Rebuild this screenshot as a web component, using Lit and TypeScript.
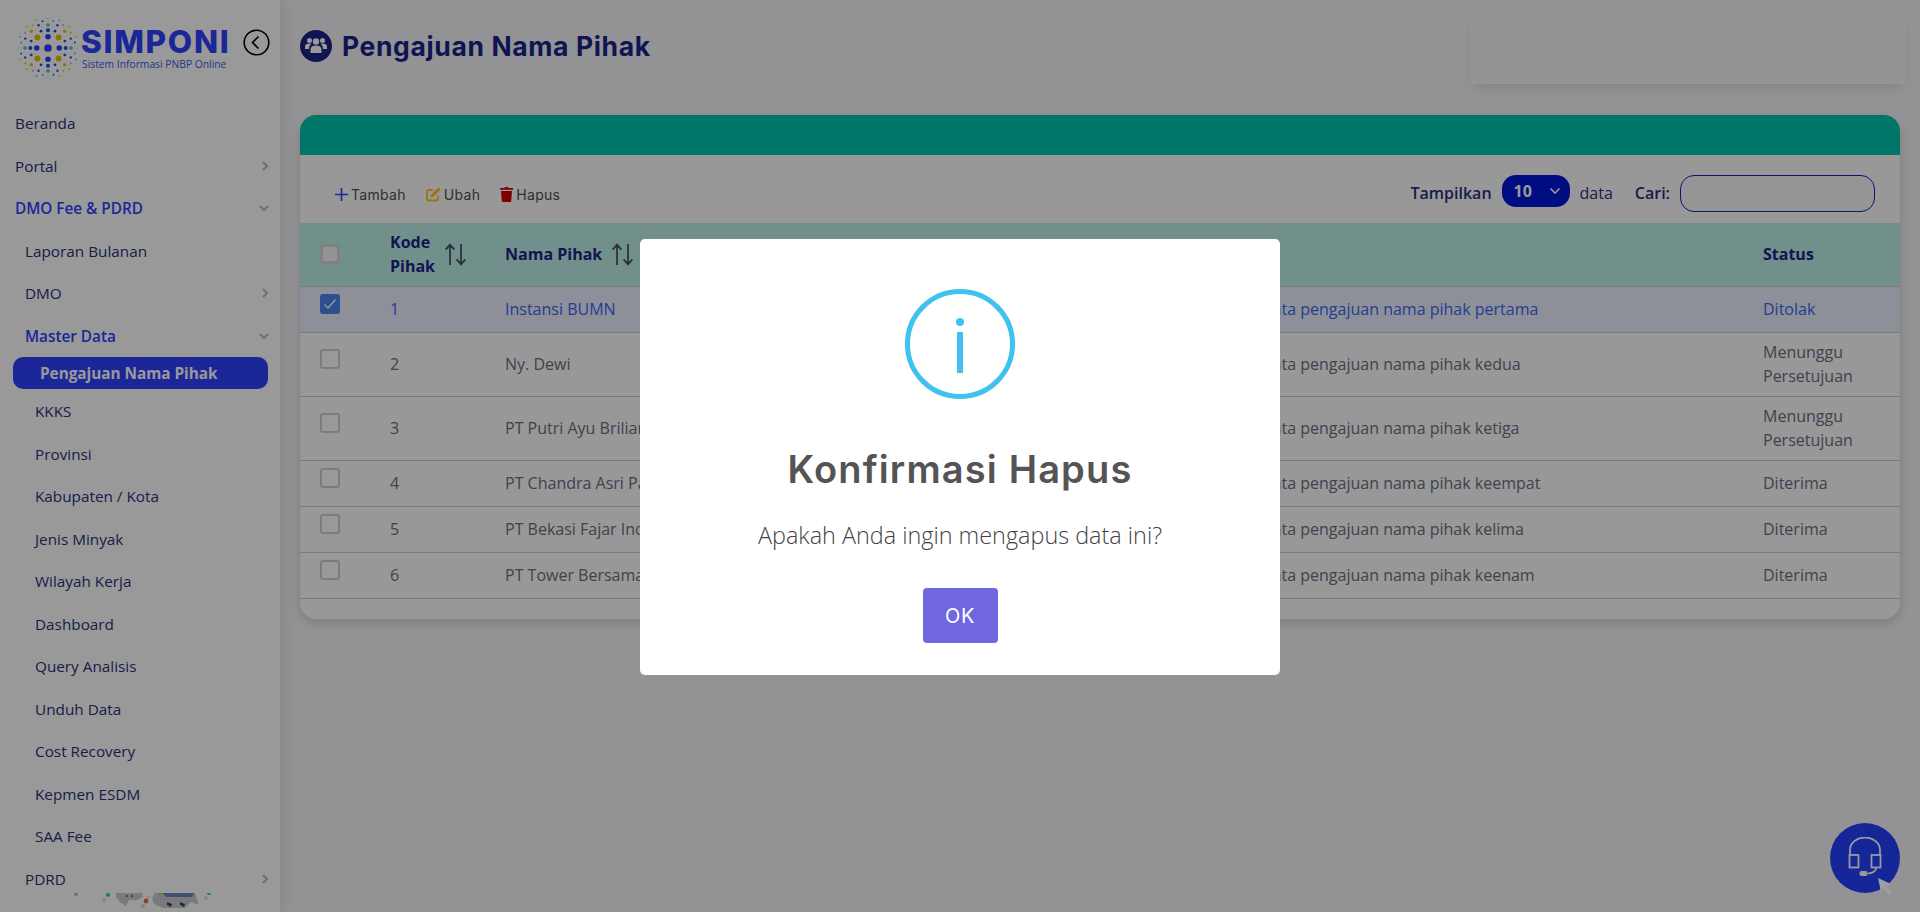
import { LitElement, html, css, svg } from "lit";
import { customElement } from "lit/decorators.js";

const BLUE = "#2e42ff", GOLD = "#f2bb1d", TEAL = "#22d3bd", PINK = "#e9a08e";

function logoDots() {
  const rings: [number, number, number, string[], number][] = [
    [10.5, 4, 2.6, [BLUE], 0],
    [14, 4, 2.8, [GOLD], 45],
    [16.5, 4, 1.9, [BLUE], 0],
    [17, 8, 1.3, [BLUE], 22.5],
    [21.5, 4, 1.7, [TEAL], 0],
    [22, 4, 1.6, [GOLD], 45],
    [23, 8, 1.1, [BLUE], 22.5],
    [25.5, 16, 0.9, [TEAL, PINK, GOLD, BLUE], 11],
    [28, 16, 0.8, [PINK, TEAL, PINK, GOLD], 0],
  ];
  const out = [svg`<circle cx="28" cy="28" r="3.6" fill="${BLUE}"></circle>`];
  for (const [r, n, s, cols, off] of rings) {
    for (let i = 0; i < n; i++) {
      const a = ((off + (i * 360) / n) * Math.PI) / 180;
      out.push(svg`<circle cx="${28 + r * Math.cos(a)}" cy="${28 + r * Math.sin(a)}" r="${s}" fill="${cols[i % cols.length]}"></circle>`);
    }
  }
  return out;
}

const chevR = html`<svg class="chev" width="10" height="12" viewBox="0 0 10 12"><path d="M3 2l4 4-4 4" fill="none" stroke="#b8b8b8" stroke-width="2"/></svg>`;
const chevD = html`<svg class="chev" width="12" height="10" viewBox="0 0 12 10"><path d="M2 3l4 4 4-4" fill="none" stroke="#b8b8b8" stroke-width="2"/></svg>`;
const sortIcon = html`<svg class="sort" width="23" height="23" viewBox="0 0 21 21"><path d="M5.5 20V2M1.5 6l4-4.500 4 4.500M15.500 1v18M11.500 15l4 4.500 4-4.500" fill="none" stroke="#46525e" stroke-width="1.6"/></svg>`;

type MenuItem = { t: string; c: string; chev?: string };
const menu: MenuItem[] = [
  { t: "Beranda", c: "l0" },
  { t: "Portal", c: "l0", chev: "r" },
  { t: "DMO Fee & PDRD", c: "l0 act", chev: "d" },
  { t: "Laporan Bulanan", c: "l1" },
  { t: "DMO", c: "l1", chev: "r" },
  { t: "Master Data", c: "l1 act", chev: "d" },
  { t: "Pengajuan Nama Pihak", c: "pill" },
  { t: "KKKS", c: "l2" },
  { t: "Provinsi", c: "l2" },
  { t: "Kabupaten / Kota", c: "l2" },
  { t: "Jenis Minyak", c: "l2" },
  { t: "Wilayah Kerja", c: "l2" },
  { t: "Dashboard", c: "l2" },
  { t: "Query Analisis", c: "l2" },
  { t: "Unduh Data", c: "l2" },
  { t: "Cost Recovery", c: "l2" },
  { t: "Kepmen ESDM", c: "l2" },
  { t: "SAA Fee", c: "l2" },
  { t: "PDRD", c: "l1", chev: "r" },
];

const rows = [
  ["1", "Instansi BUMN", "Data pengajuan nama pihak pertama", "Ditolak"],
  ["2", "Ny. Dewi", "Data pengajuan nama pihak kedua", "Menunggu Persetujuan"],
  ["3", "PT Putri Ayu Briliant", "Data pengajuan nama pihak ketiga", "Menunggu Persetujuan"],
  ["4", "PT Chandra Asri Pacific", "Data pengajuan nama pihak keempat", "Diterima"],
  ["5", "PT Bekasi Fajar Industrial", "Data pengajuan nama pihak kelima", "Diterima"],
  ["6", "PT Tower Bersama Infrastructure", "Data pengajuan nama pihak keenam", "Diterima"],
];

@customElement("app-root")
export class AppRoot extends LitElement {
  static styles = css`
    :host { display: block; position: relative; width: 1920px; height: 912px; overflow: hidden; background: #f6f6f9; font-family: "Open Sans", sans-serif; color: #28327c; }
    * { box-sizing: border-box; }
    .page { display: flex; height: 912px; }
    .side { width: 280px; flex: none; background: #fff; box-shadow: 2px 0 14px rgba(0,0,0,.12); display: flex; flex-direction: column; position: relative; }
    .brand { height: 102px; flex: none; display: flex; align-items: flex-start; padding: 18px 0 0 18px; }
    .brand .dots { flex: none; }
    .brand .words { margin-left: 3px; width: 150px; }
    .simponi { font-family: Inter, sans-serif; font-weight: 800; font-size: 31.5px; line-height: 26px; color: #2e42ff; letter-spacing: 1.7px; margin-top: 11px; height: 26px; white-space: nowrap; }
    .tag { font-size: 10.3px; line-height: 13px; color: #4457f0; margin: 3px 0 0 1px; white-space: nowrap; }
    .back { margin: 11px 0 0 12px; flex: none; }
    .menu { height: 791px; overflow: hidden; flex: none; }
    .mi { height: 42.5px; display: flex; align-items: center; font-size: 15.3px; color: #28327c; white-space: nowrap; position: relative; padding-right: 10px; }
    .mi span { flex: 1; }
    .l0 { padding-left: 15px; }
    .l1 { padding-left: 25px; }
    .l2 { padding-left: 35px; }
    .act { color: #2e42ff; font-weight: 600; }
    .pill { height: 32px; margin: 0 12px 1px 13px; background: #2e42ff; color: #fff; border-radius: 10px; padding: 0 0 0 27px; font-weight: 700; font-size: 15.3px; }
    .art { height: 19px; flex: none; }
    .main { flex: 1; padding: 0 20px; min-width: 0; }
    .top { height: 115px; display: flex; justify-content: space-between; align-items: flex-start; }
    .title { display: flex; align-items: center; gap: 10px; margin-top: 30px; }
    .title h1 { margin: 0; font-family: Inter, sans-serif; font-weight: 700; font-size: 26.5px; letter-spacing: 0.62px; line-height: 32px; color: #1b2488; white-space: nowrap; }
    .panel { width: 436px; height: 70px; margin: 14px -6px 0 0; background: #f7f7fa; box-shadow: 0 8px 12px -4px rgba(0,0,0,.12); }
    .card { background: #fdfdfd; border-radius: 16px; box-shadow: 0 4px 12px rgba(0,0,0,.16); height: 504px; overflow: hidden; }
    .bar { height: 40px; background: #00c5ae; }
    .tools { height: 68px; display: flex; justify-content: space-between; align-items: flex-start; padding: 20px 25px 0 35px; }
    .left { display: flex; align-items: center; margin-top: 8px; height: 22px; font-family: Inter, sans-serif; font-size: 14px; color: #505050; }
    .act-btn { display: flex; align-items: center; gap: 3px; margin-right: 20px; letter-spacing: 0.3px; }
    .right { display: flex; align-items: flex-start; font-size: 16px; font-weight: 600; color: #2a2f80; }
    .right .lbl { line-height: 32px; margin-top: 2px; }
    .sel { width: 68px; height: 32px; margin: 0 10px 0 10px; background: #0015d8; border-radius: 14px; color: #fff; display: flex; align-items: center; justify-content: space-between; padding: 0 8px 0 12px; font-size: 16px; font-weight: 700; }
    .data { font-weight: 400; margin-right: 22px; }
    .inp { width: 195px; height: 37px; margin-left: 10px; border: 1.5px solid #1a22c0; border-radius: 14px; background: #f8f8f8; }
    table { width: 100%; border-collapse: collapse; table-layout: fixed; font-size: 16px; }
    col.c1 { width: 70px; } col.c2 { width: 115px; } col.c3 { width: 756px; } col.c4 { width: 502px; }
    th, td { padding: 0 20px; text-align: left; vertical-align: middle; line-height: 24px; }
    thead tr { height: 63px; background: #bdf0e8; }
    th { font-weight: 700; color: #1b2488; padding-top: 0; }
    .th { display: flex; align-items: center; }
    .th .sort { margin-left: 9px; flex: none; }
    .kode { width: 46px; }
    tbody tr { border-top: 1px solid #c8ced8; height: 46px; }
    tbody tr.two { height: 64px; }
    tbody tr:last-child { border-bottom: 1px solid #c8ced8; }
    td { color: #687083; }
    tr.sel-row { background: #ebf1ff; }
    tr.sel-row td { color: #3c66f0; }
    .cb { width: 20px; height: 20px; border: 2px solid #c9d0dc; border-radius: 3px; margin-bottom: 10px; background: #fff; display: block; }
    th .cb { border: 3px solid #d2d5d8; background: #f5f5f5; margin-bottom: 0; }
    .cb.on { background: #4a86ef; border: none; display: flex; align-items: center; justify-content: center; }
    .help { position: absolute; right: 20px; bottom: 19.5px; width: 70px; height: 70px; border-radius: 50%; background: #2440ff; display: flex; align-items: center; justify-content: center; }
    .overlay { position: absolute; inset: 0; padding-top: 2px; background: rgba(0,0,0,.4); display: flex; align-items: center; justify-content: center; }
    .cursor { position: absolute; left: 1877px; top: 877px; }
    .modal { width: 640px; height: 436px; background: #fff; border-radius: 5px; display: flex; flex-direction: column; align-items: center; padding-top: 50px; }
    .modal .ic { display: block; flex: none; }
    .modal h2 { margin: 45px 0 0; font-family: Inter, sans-serif; font-weight: 600; font-size: 38px; letter-spacing: 1.15px; line-height: 50px; color: #545454; white-space: nowrap; }
    .modal p { margin: 24px 0 0; font-size: 23.4px; font-weight: 300; line-height: 34px; color: #444; white-space: nowrap; }
    .ok { margin-top: 36px; width: 75px; height: 55px; background: #7066e0; color: #fff; border-radius: 4px; display: flex; align-items: center; justify-content: center; font-family: Inter, sans-serif; font-size: 20px; letter-spacing: 0.6px; }
  `;

  render() {
    return html`
      <div class="page">
        <aside class="side">
          <div class="brand">
            <svg class="dots" width="60" height="60" viewBox="0 0 56 56">${logoDots()}</svg>
            <div class="words">
              <div class="simponi">SIMPONI</div>
              <div class="tag">Sistem Informasi PNBP Online</div>
            </div>
            <svg class="back" width="27" height="27" viewBox="0 0 27 27"><circle cx="13.5" cy="13.5" r="12.3" fill="none" stroke="#000" stroke-width="1.6"/><path d="M15.5 7.5l-6 6 6 6" fill="none" stroke="#000" stroke-width="1.6"/></svg>
          </div>
          <nav class="menu">
            ${menu.map((m) => html`<div class="mi ${m.c}"><span>${m.t}</span>${m.chev === "r" ? chevR : m.chev === "d" ? chevD : ""}</div>`)}
          </nav>
          <svg class="art" width="280" height="19" viewBox="0 0 280 19">
            <circle cx="76" cy="1" r="2" fill="#bbb"/><circle cx="108" cy="2" r="2" fill="${TEAL}"/><circle cx="104" cy="7" r="2" fill="#ddd"/>
            <path d="M116 0h26l1 4-6 3h-8l-3 6-6-4-4-5z" fill="#c9ccd3"/><circle cx="127" cy="3" r="1" fill="#555"/><circle cx="132" cy="3" r="1" fill="#555"/>
            <circle cx="146" cy="8" r="2.4" fill="#ee6a3a"/><circle cx="143" cy="13" r="2" fill="#ddd"/><circle cx="148" cy="4" r="1.6" fill="#ddd"/>
            <path d="M155 0h40l4 12-8-3-6 6h-22l-9-4-2-6z" fill="#c9ccd3"/><path d="M162 0h32l-2 4h-26z" fill="#6d84b8"/><circle cx="160" cy="1" r="1.6" fill="${GOLD}"/>
            <path d="M167 9l5 2-1 3-4-2zM180 9l5 2-1 3-4-2z" fill="#444"/><circle cx="209" cy="0" r="2" fill="${TEAL}"/><circle cx="206" cy="5" r="2" fill="#ddd"/>
          </svg>
        </aside>
        <main class="main">
          <div class="top">
            <div class="title">
              <svg width="32" height="32" viewBox="0 0 32 32"><circle cx="16" cy="16" r="16" fill="#1b2488"/><g fill="#fff"><circle cx="16" cy="11.5" r="3.2"/><circle cx="9.5" cy="10.5" r="2.5"/><circle cx="22.5" cy="10.5" r="2.5"/><path d="M10.5 23v-3.5c0-2.6 2-4 5.5-4s5.500 1.400 5.500 4V23z"/><path d="M5 19v-2.500C5 14.500 6.500 13.500 9.500 13.500c.8 0 1.300.1 1.800.3-1.200 1-2 2.300-2.200 4.200v1zM27 19v-2.500c0-2-1.500-3-4.500-3-.8 0-1.300.1-1.800.3 1.200 1 2 2.300 2.200 4.200v1z"/></g></svg>
              <h1>Pengajuan Nama Pihak</h1>
            </div>
            <div class="panel"></div>
          </div>
          <section class="card">
            <div class="bar"></div>
            <div class="tools">
              <div class="left">
                <div class="act-btn"><svg width="13" height="13" viewBox="0 0 13 13"><path d="M6.500 0v13M0 6.500h13" stroke="#2e42ff" stroke-width="1.6"/></svg>Tambah</div>
                <div class="act-btn"><svg width="15" height="15" viewBox="0 0 15 15"><path d="M12 8.500V12a1.500 1.500 0 0 1-1.500 1.500H2.500A1.500 1.500 0 0 1 1 12V4.500A1.500 1.500 0 0 1 2.500 3H7" fill="none" stroke="#ffc71f" stroke-width="1.800"/><path d="M5 7.800L11.800 1a1 1 0 0 1 1.400 0l.8.8a1 1 0 0 1 0 1.400L7.200 10 4.600 10.400z" fill="#ffc71f"/></svg>Ubah</div>
                <div class="act-btn"><svg width="13" height="15" viewBox="0 0 13 15"><path d="M4.500 1l.5-1h3l.5 1H13v1.800H0V1zM1 4h11l-.8 10a1 1 0 0 1-1 1H2.800a1 1 0 0 1-1-1z" fill="#d40000"/></svg>Hapus</div>
              </div>
              <div class="right">
                <span class="lbl">Tampilkan</span>
                <div class="sel">10<svg width="14" height="10" viewBox="0 0 14 10"><path d="M2.500 2.500L7 7l4.500-4.500" fill="none" stroke="#fff" stroke-width="1.600"/></svg></div>
                <span class="lbl data">data</span>
                <span class="lbl">Cari:</span>
                <div class="inp"></div>
              </div>
            </div>
            <table>
              <colgroup><col class="c1"/><col class="c2"/><col class="c3"/><col class="c4"/><col/></colgroup>
              <thead>
                <tr>
                  <th><span class="cb"></span></th>
                  <th><div class="th"><span class="kode">Kode Pihak</span>${sortIcon}</div></th>
                  <th><div class="th"><span>Nama Pihak</span>${sortIcon}</div></th>
                  <th></th>
                  <th>Status</th>
                </tr>
              </thead>
              <tbody>
                ${rows.map((r, i) => html`
                  <tr class="${i === 0 ? "sel-row" : ""} ${r[3].length > 10 ? "two" : ""}">
                    <td>${i === 0
                      ? html`<span class="cb on"><svg width="14" height="12" viewBox="0 0 14 12"><path d="M1.500 6.500L5 10l7.500-8.500" fill="none" stroke="#fff" stroke-width="1.300"/></svg></span>`
                      : html`<span class="cb"></span>`}</td>
                    <td>${r[0]}</td><td>${r[1]}</td><td>${r[2]}</td><td>${r[3]}</td>
                  </tr>`)}
              </tbody>
            </table>
          </section>
        </main>
      </div>
      <div class="help">
        <svg width="40" height="42" viewBox="0 0 40 42"><g fill="none" stroke="#fff" stroke-width="1.800"><path d="M5 19v-6a15 12.500 0 0 1 30 0v6"/><rect x="4.500" y="18" width="9" height="12.500"/><rect x="26.500" y="18" width="9" height="12.500"/><path d="M31 31c0 3-3 5-8 5.500"/></g><rect x="14.500" y="34" width="8" height="5" rx="2" fill="#fff"/></svg>
      </div>
      <div class="overlay">
        <div class="modal">
          <svg class="ic" width="110" height="110" viewBox="0 0 110 110"><circle cx="55" cy="55" r="52.500" fill="none" stroke="#3fc3ee" stroke-width="5"/><circle cx="55" cy="33" r="4" fill="#3fc3ee"/><rect x="52" y="43" width="6" height="41" fill="#3fc3ee"/></svg>
          <h2>Konfirmasi Hapus</h2>
          <p>Apakah Anda ingin mengapus data ini?</p>
          <div class="ok">OK</div>
        </div>
      </div>
      <svg class="cursor" width="16" height="19" viewBox="0 0 16 19"><path d="M1 1l13 6-5 1.500 6 8-2.500 2-6-8L4 15z" fill="#a0a0a0"/></svg>
    `;
  }
}
